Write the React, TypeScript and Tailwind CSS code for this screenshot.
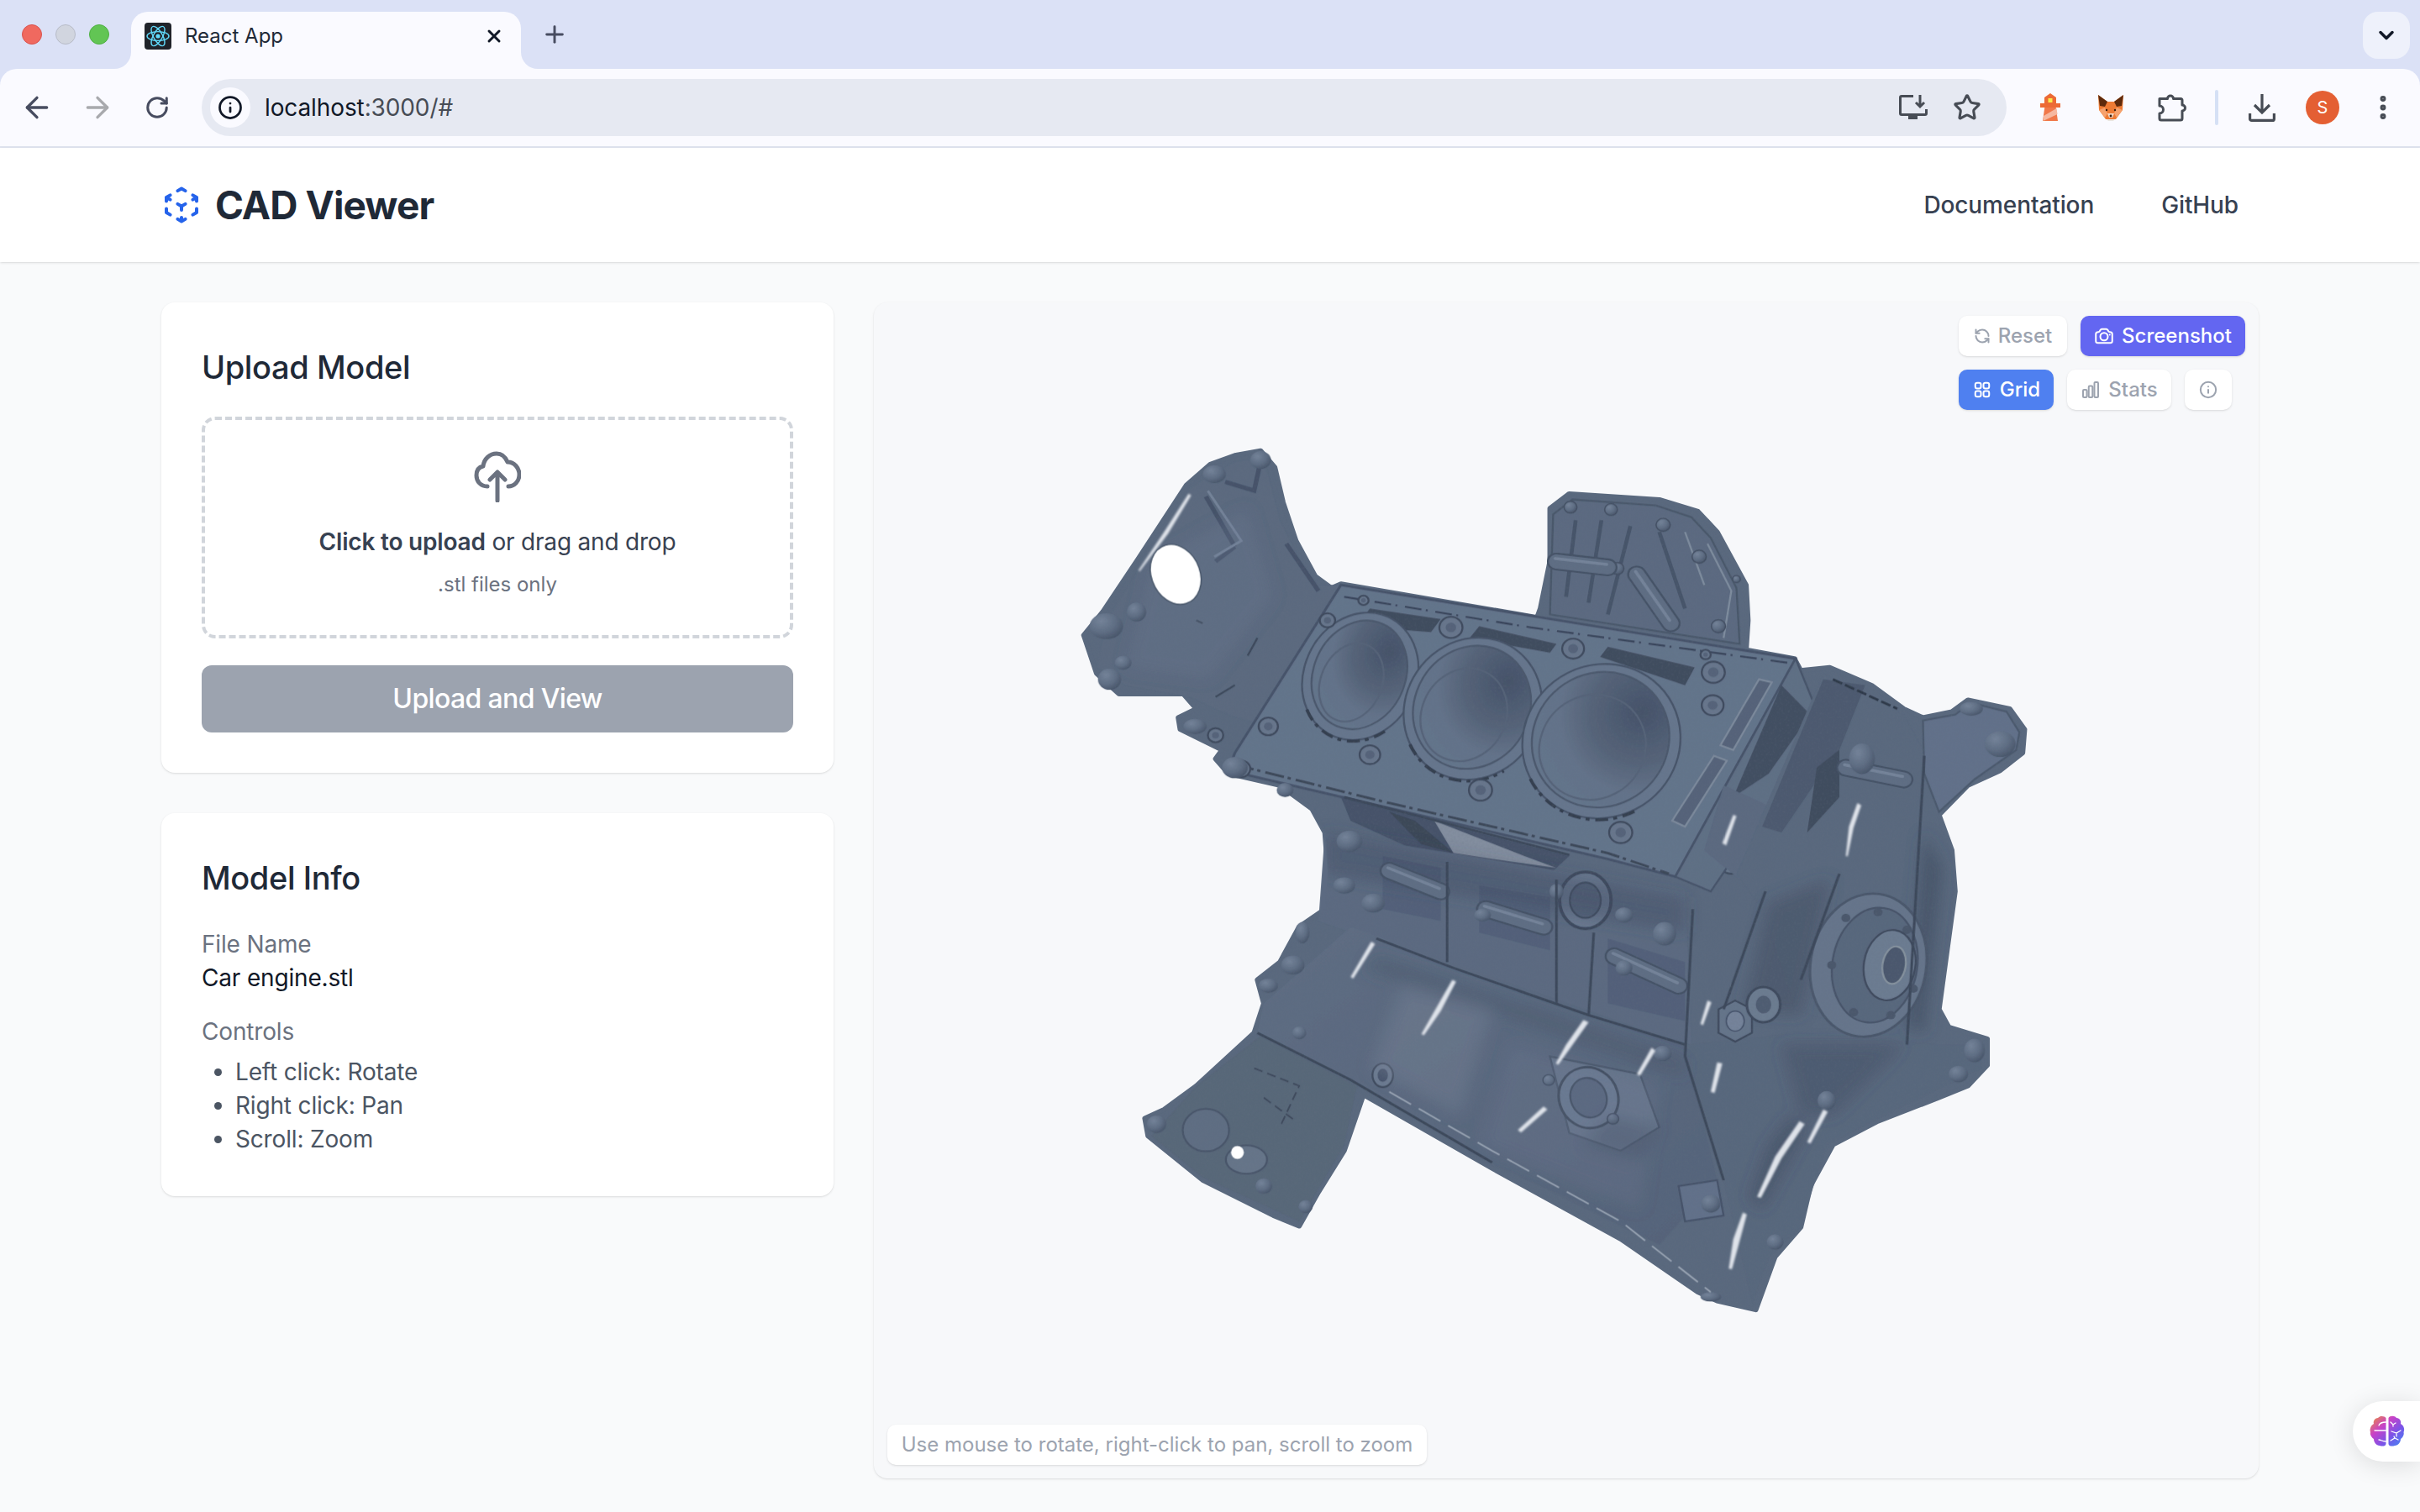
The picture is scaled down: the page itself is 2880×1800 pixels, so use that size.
import { ArrowLeft, ArrowRight, ChevronDown, EllipsisVertical, Info, Plus, RefreshCcw, RotateCw, Star, X } from 'lucide-react';
import { HiOutlineCamera, HiOutlineChartBar, HiOutlineCubeTransparent, HiOutlineSquares2X2 } from 'react-icons/hi2';

function ReactFavicon() {
  return (
    <svg width="32" height="32" viewBox="0 0 32 32" className="shrink-0">
      <rect width="32" height="32" rx="4" fill="#20232a" />
      <g fill="none" stroke="#61dafb" strokeWidth="1.4">
        <ellipse cx="16" cy="16" rx="13" ry="5.4" />
        <ellipse cx="16" cy="16" rx="13" ry="5.4" transform="rotate(60 16 16)" />
        <ellipse cx="16" cy="16" rx="13" ry="5.4" transform="rotate(120 16 16)" />
      </g>
      <circle cx="16" cy="16" r="2.6" fill="#61dafb" />
    </svg>
  );
}

function InstallIcon() {
  return (
    <svg width="34" height="32" viewBox="0 0 34 32" fill="none" stroke="#474c55" strokeWidth="3">
      <path d="M17 2.5H3a1.5 1.5 0 0 0-1.5 1.500V23a1.500 1.500 0 0 0 1.500 1.500h28a1.500 1.500 0 0 0 1.500-1.500v-5" />
      <path d="M25 1v13M20 10l5 5 5-5" />
      <path d="M11 26h11v4H11z" fill="#474c55" stroke="none" />
    </svg>
  );
}

function LighthouseIcon() {
  return (
    <svg width="24" height="34" viewBox="0 0 24 34">
      <path d="M3 33 6 12h12l3 21z" fill="#f0784a" />
      <path d="M4 27 19.500 18l1 7L3.500 33z" fill="#f6b8a0" />
      <path d="M0 12h24v5H0z" fill="#ec6a35" />
      <path d="M5 12V5l7-5 7 5v7z" fill="#ec6a35" />
      <path d="M9.500 6h5v5h-5z" fill="#fbe94b" />
    </svg>
  );
}

function FoxIcon() {
  return (
    <svg width="32" height="32" viewBox="0 0 32 32">
      <path d="M1 1 12 9h8L31 1l-1 18-8 11h-12L2 19z" fill="#ee7b35" />
      <path d="M1 1l11 8-3 6-6-1zM31 1 20 9l3 6 6-1z" fill="#5e2a0c" />
      <path d="M2 19l7-3 3 7-3 5zM30 19l-7-3-3 7 3 5z" fill="#f6a26e" />
      <path d="M12 23h8l-2 5h-4z" fill="#f4d8c6" />
      <circle cx="16" cy="26" r="1.400" fill="#3a1c0a" />
      <circle cx="11" cy="19" r="1.200" fill="#3a1c0a" />
      <circle cx="21" cy="19" r="1.200" fill="#3a1c0a" />
      <path d="M11 30h10l-2 2h-6z" fill="#e9e5e0" />
    </svg>
  );
}

function PuzzleIcon() {
  return (
    <svg width="34" height="34" viewBox="0 0 34 34" fill="none" stroke="#474c55" strokeWidth="3" strokeLinejoin="round">
      <path d="M2 6.500h9.500a3.500 3.500 0 0 1 7 0H27a2 2 0 0 1 2 2v5.500a3.500 3.500 0 0 1 0 7v9a2 2 0 0 1-2 2H4a2 2 0 0 1-2-2v-6a4.500 4.500 0 0 0 0-9z" />
    </svg>
  );
}

function DownloadIcon() {
  return (
    <svg width="32" height="34" viewBox="0 0 32 34" fill="none" stroke="#474c55" strokeWidth="3.200">
      <path d="M16 1v21M7 14l9 9 9-9" />
      <path d="M1.600 24v6.400a2 2 0 0 0 2 2h24.800a2 2 0 0 0 2-2V24" />
    </svg>
  );
}

function UploadCloudIcon() {
  return (
    <svg width="56" height="62" viewBox="24 16 56 62" fill="none" stroke="#6b7280" strokeWidth="5" strokeLinecap="round" strokeLinejoin="round">
      <path d="M40 59C32 59 27 53 27 46 27 40 30 36 35 35 36 26 43 20 51 20 57 20 61 23 64 30 72 30 78 37 78 45 78 53 72 59 65 59" />
      <path d="M52 76V42M43 51 52 42 61 51" />
    </svg>
  );
}

function BrainIcon() {
  return (
    <svg width="42" height="38" viewBox="0 0 42 38">
      <defs>
        <linearGradient id="brain" x1="0" y1="0" x2="1" y2="1">
          <stop offset="0" stopColor="#f0952f" />
          <stop offset="0.35" stopColor="#c842c8" />
          <stop offset="0.65" stopColor="#7a54e8" />
          <stop offset="1" stopColor="#3f8cf4" />
        </linearGradient>
      </defs>
      <path
        fill="url(#brain)"
        d="M19.500 3C18 .500 12 0 10 3 6 3 4 7 5 10 1 12 0 17 1 20c-1 3 2 7 4 8 0 4 3 8 7 8 3 1 7 1 7.500-2zM22.500 3C24 0 30 0 32 3c4 0 6 4 5 7 4 2 5 7 3.500 10 1 3-1.500 7-3.500 8 0 4-3 8-7 8-3 1-7 1-7.500-2z"
      />
      <g fill="none" stroke="#ffffff" strokeWidth="1.300" strokeLinecap="round">
        <path d="M6 18h13.500M11 12c1-3 4-4 8.500-4M11 29c3 0 3 2 8.500 2" />
        <path d="M25 8l3 3 3-2M28 11v2M26 19l6 2 5-3M32 21v4M25 30l5-3 4 2M30 27l-1-2" />
      </g>
    </svg>
  );
}

const deckBolts = [
  [444, 340, 12], [500, 306, 8], [636, 352, 18], [826, 388, 17], [1044, 428, 18], [1043, 484, 17],
  [352, 520, 15], [510, 568, 16], [682, 628, 18], [900, 700, 18], [1072, 750, 20], [1032, 398, 8],
  [310, 592, 14], [270, 535, 12], [1192, 535, 12],
];

const coverBolts = [
  [822, 148, 10], [885, 152, 10], [966, 178, 11], [1022, 232, 11], [1052, 350, 11], [800, 240, 8],
  [895, 252, 10], [1080, 270, 6],
];

// rounded bosses around the casting: x, y, rx, ry
const lumps = [
  [340, 68, 16, 15], [268, 92, 18, 15], [100, 350, 26, 22], [147, 326, 15, 16], [126, 412, 13, 12], [105, 440, 18, 18],
  [238, 520, 18, 13], [300, 590, 20, 18], [378, 628, 13, 12], [478, 715, 20, 18], [515, 820, 18, 16],
  [470, 790, 17, 14], [405, 870, 11, 18], [352, 960, 15, 12], [390, 925, 18, 16], [178, 1195, 15, 15], [1490, 550, 24, 22],
  [1445, 490, 18, 12], [1450, 1070, 16, 20], [1425, 1110, 15, 14], [968, 872, 18, 20], [905, 930, 13, 13], [800, 800, 11, 13],
  [905, 840, 14, 13], [685, 840, 13, 11], [1220, 1155, 14, 16], [1040, 1330, 15, 15],
  [1140, 1395, 13, 13], [965, 1075, 14, 13], [1040, 1488, 16, 8], [1275, 575, 20, 26], [400, 1040, 11, 11],
];

// cast pipes: path drawn wide and dark, then narrow and light
const tubes = [
  'M800 240 880 250',
  'M925 262 978 345',
  'M540 765 620 800',
  'M690 830 780 860',
  'M890 910 990 960',
  'M1250 590 1340 610',
];

const highlights = [
  'M638 950 612 1000 590 1042 594 1044 620 1003 644 953z',
  'M842 1018 815 1060 799 1092 803 1094 824 1062 850 1022z',
  'M1178 1190 1140 1250 1112 1318 1118 1320 1150 1253 1186 1195z',
  'M1090 1345 1075 1390 1068 1440 1073 1441 1085 1393 1096 1348z',
  'M1050 1090 1040 1140 1046 1142 1058 1092z',
  'M1268 650 1255 690 1250 740 1253 740 1262 692 1274 654z',
  'M1058 718 1075 670 1080 672 1064 722z',
  'M1035 985 1024 1025 1028 1027 1041 988z',
  'M228 125 190 190 150 255 152 257 196 193 232 128z',
  'M512 885 480 945 484 948 518 889z',
  'M948 1065 925 1110 930 1113 954 1070z',
  'M780 1165 740 1205 745 1209 786 1170z',
  'M1215 1170 1190 1225 1195 1228 1222 1174z',
];

const darkLines = [
  'M470 640 820 738',
  'M520 880 640 930 850 1010 1000 1060',
  'M335 1040 480 1120 700 1260',
  'M630 750 630 920',
  'M800 780 800 990',
  'M858 870 850 1010',
  'M1012 830 1000 1080 1060 1290',
  'M1125 800 1060 1000',
  'M1240 770 1180 950',
  'M1372 570 1345 1060',
];

const shades = [
  { d: 'M440 700 1000 810 1000 870 440 770z', fill: '#3f4c5f', opacity: 0.4 },
  { d: 'M520 905 1000 1085 1000 1115 500 935z', fill: '#3f4c5f', opacity: 0.3 },
  { d: 'M1372 700 1400 760 1372 1040 1345 1030z', fill: '#3d495b', opacity: 0.55 },
  { d: 'M1130 820 1225 780 1180 1010 1090 1000z', fill: '#3f4c5f', opacity: 0.45 },
  { d: 'M1150 1060 1340 1060 1230 1180 1180 1180z', fill: '#3f4c5f', opacity: 0.4 },
  { d: 'M1130 1230 1165 1180 1190 1200 1120 1340 1100 1320z', fill: '#39455a', opacity: 0.45 },
  { d: 'M560 960 700 1000 650 1180 510 1100z', fill: '#7a889c', opacity: 0.35 },
  { d: 'M730 1060 960 1130 930 1340 680 1230z', fill: '#71809a', opacity: 0.2 },
  { d: 'M880 1180 960 1200 930 1260 840 1230z', fill: '#3f4c5f', opacity: 0.3 },
  { d: 'M170 240 320 150 360 300 260 440 130 420z', fill: '#71809a', opacity: 0.2 },
];

function Engine() {
  const outline =
    'M65 365 95 325 150 235 225 110 262 75 300 60 340 52 362 80 375 140 395 205 425 265 450 285 465 278 770 335 775 320 790 240 790 150 820 125 960 135 1020 155 1050 190 1095 280 1098 340 1095 390 1170 405 1180 425 1225 420 1290 450 1340 490 1370 505 1415 495 1440 475 1505 490 1528 525 1525 565 1490 595 1440 620 1395 670 1415 730 1420 800 1395 1000 1410 1030 1470 1050 1470 1095 1440 1130 1395 1150 1300 1190 1230 1230 1195 1300 1180 1370 1140 1420 1110 1510 1050 1495 1020 1480 900 1390 700 1270 540 1170 500 1145 470 1240 430 1310 400 1368 360 1350 250 1290 165 1215 160 1185 190 1170 240 1130 330 1040 345 990 335 950 370 920 400 860 440 830 445 770 440 700 420 660 370 620 290 600 270 575 280 560 215 525 212 505 240 490 220 465 120 465 85 430z';
  return (
    <svg viewBox="0 0 1568 1568" preserveAspectRatio="none" className="absolute left-[200px] top-[140px] h-[1100px] w-[1200px]">
      <defs>
        <radialGradient id="bore" cx="0.72" cy="0.22" r="0.75">
          <stop offset="0" stopColor="#46536a" />
          <stop offset="0.5" stopColor="#566479" />
          <stop offset="0.8" stopColor="#64738a" />
          <stop offset="1" stopColor="#64748b" />
        </radialGradient>
        <radialGradient id="lump" cx="0.35" cy="0.3" r="0.8">
          <stop offset="0" stopColor="#75849a" />
          <stop offset="0.55" stopColor="#5f6e84" />
          <stop offset="1" stopColor="#455266" />
        </radialGradient>
        <linearGradient id="lower" x1="0" y1="0" x2="1" y2="1">
          <stop offset="0" stopColor="#5f6e84" />
          <stop offset="1" stopColor="#56647a" />
        </linearGradient>
        <filter id="soft">
          <feGaussianBlur stdDeviation="1" />
        </filter>
        <filter id="wide" x="-20%" y="-20%" width="140%" height="140%">
          <feGaussianBlur stdDeviation="12" />
        </filter>
        <filter id="glow">
          <feGaussianBlur stdDeviation="1.500" />
        </filter>
        <filter id="grain" x="0" y="0" width="100%" height="100%">
          <feTurbulence type="fractalNoise" baseFrequency="0.3" numOctaves="2" seed="4" />
          <feColorMatrix values="0 0 0 0 0.15 0 0 0 0 0.18 0 0 0 0 0.24 1.6 0 0 0 -0.78" />
          <feComposite in2="SourceGraphic" operator="in" />
        </filter>
        <clipPath id="castingClip">
          <path d={outline} />
        </clipPath>
      </defs>

      <path d={outline} fill="#5a697e" stroke="#5a697e" strokeWidth="8" strokeLinejoin="round" />

      <g filter="url(#soft)">
        {/* rear cover */}
        <path d="M790 330 795 160 825 135 955 145 1010 165 1040 200 1080 285 1085 380z" fill="#5c6b81" stroke="#4a586b" strokeWidth="3" />
        <path d="M830 170 815 300M870 170 850 310M915 180 880 330M960 190 1000 320" stroke="#47546a" strokeWidth="6" fill="none" />
        <path d="M1035 210 1072 290 1060 370M1000 190 1030 280" stroke="#7f8d9f" strokeWidth="3" fill="none" />
        {coverBolts.map(([x, y, r]) => (
          <circle key={`${x}-${y}`} cx={x} cy={y} r={r} fill="url(#lump)" stroke="#445064" strokeWidth="2" />
        ))}

        {/* left flange */}
        <path d="M100 340 230 115 300 70 345 65 370 170 420 280 470 280 350 520 290 500 230 470 130 450 85 420z" fill="#5b6a7f" />
        <path d="M255 130 300 215M300 215 270 240M340 70 330 120 285 105M380 210 430 290" stroke="#46536a" strokeWidth="7" fill="none" />
        <path d="M258 120 310 205 268 232" stroke="#75849a" strokeWidth="4" fill="none" />
        <path d="M240 340 250 345M320 400 335 370M300 450 270 470" stroke="#3e4a5c" strokeWidth="3" fill="none" />

        {/* deck */}
        <path d="M465 280 1172 405 985 775 880 745 290 595 300 565z" fill="#64748b" stroke="#46536a" strokeWidth="4" />
        <path d="M510 320 620 338 605 360 488 350zM680 350 800 380 790 395 665 370zM880 385 1015 420 1000 450 868 402z" fill="#414d5f" />
        <path d="M470 300 760 352 1160 412" stroke="#38445a" strokeWidth="3" strokeDasharray="26 7 3 12" fill="none" />
        <path d="M300 585 540 650 880 735 975 770" stroke="#3c4859" strokeWidth="4" strokeDasharray="30 6 5 8" fill="none" />

        {/* bores */}
        {[
          [495, 435, 88, 110],
          [670, 490, 106, 122],
          [870, 545, 122, 132],
        ].map(([cx, cy, rx, ry]) => (
          <g key={cx} transform={`rotate(18 ${cx} ${cy})`}>
            <ellipse cx={cx} cy={cy} rx={rx} ry={ry} fill="#66768d" stroke="#475469" strokeWidth="3" />
            <ellipse cx={cx - 2} cy={cy - 2} rx={rx - 16} ry={ry - 16} fill="url(#bore)" stroke="#4c596d" strokeWidth="3" />
            <ellipse cx={cx - 10} cy={cy + 14} rx={rx - 40} ry={ry - 42} fill="none" stroke="#566479" strokeWidth="3" />
            <path
              d={`M${cx - rx * 0.7} ${cy + ry * 0.72}A${rx} ${ry} 0 0 0 ${cx + rx * 0.74} ${cy + ry * 0.7}`}
              fill="none"
              stroke="#343f50"
              strokeWidth="5"
              strokeDasharray="20 8 6 9"
            />
          </g>
        ))}

        {deckBolts.map(([x, y, r]) => (
          <g key={`${x}-${y}`}>
            <circle cx={x} cy={y} r={r} fill="#67768c" stroke="#3f4b5e" strokeWidth="3" />
            <circle cx={x} cy={y} r={r * 0.45} fill="#56647a" />
          </g>
        ))}

        {/* deck side with slots */}
        <path d="M1172 405 1215 520 1040 800 985 775z" fill="#5f6f85" stroke="#47546a" strokeWidth="3" />
        <path d="M1115 440 1135 445 1075 560 1055 552zM1045 570 1065 578 1000 690 980 680z" fill="#56647a" stroke="#7d8b9d" strokeWidth="3" />
        <path d="M1150 450 1195 500 1130 600 1075 640z" fill="#434f62" />
        <path d="M1060 620 1160 670 1085 780 1030 730z" fill="#5b6a80" />

        {/* under deck */}
        <path d="M465 640 820 740 790 770 600 740 480 680z" fill="#46536a" />
        <path d="M610 680 750 740 800 760 700 745 640 735z" fill="#838e9f" />
        <path d="M540 665 590 720 640 735 580 680z" fill="#3c4859" />

        {/* mid section */}
        <path d="M440 700 1000 800 1010 1060 850 1010 640 930 430 850z" fill="#5c6b81" />
        <path d="M530 740 620 760 620 850 530 830zM680 790 790 810 790 900 680 870zM880 880 1000 920 1000 1020 880 990z" fill="#53617a" />
        <ellipse cx="845" cy="815" rx="40" ry="48" fill="#6a7990" stroke="#3f4b5e" strokeWidth="5" />
        <ellipse cx="845" cy="815" rx="24" ry="30" fill="#56647b" stroke="#414e61" strokeWidth="3" />

        {/* lower pan */}
        <path d="M345 990 480 860 1000 1060 1050 1290 960 1400 700 1260 480 1120 335 1040z" fill="url(#lower)" />
        <path d="M790 1080 930 1110 960 1200 900 1240 820 1210z" fill="#65748a" stroke="#4b586c" strokeWidth="3" />
        <ellipse cx="850" cy="1150" rx="46" ry="52" fill="#6a7990" stroke="#3e4a5c" strokeWidth="4" transform="rotate(-15 850 1150)" />
        <ellipse cx="850" cy="1150" rx="28" ry="34" fill="#56647c" stroke="#414e61" strokeWidth="3" transform="rotate(-15 850 1150)" />
        <circle cx="788" cy="1120" r="9" fill="url(#lump)" stroke="#3f4b5e" strokeWidth="2" />
        <circle cx="888" cy="1186" r="9" fill="url(#lump)" stroke="#3f4b5e" strokeWidth="2" />
        <ellipse cx="530" cy="1112" rx="16" ry="20" fill="#6b7a90" stroke="#3f4b5e" strokeWidth="3" />
        <ellipse cx="530" cy="1112" rx="8" ry="11" fill="#46536a" />

        {/* lower-left plate */}
        <path d="M340 1045 490 1130 470 1230 400 1360 250 1285 170 1215 240 1130z" fill="#586779" />
        <circle cx="255" cy="1205" r="36" fill="#5f6e83" stroke="#4a576b" strokeWidth="3" />
        <ellipse cx="318" cy="1255" rx="32" ry="24" fill="#667589" stroke="#4a576b" strokeWidth="3" />
        <path d="M330 1100 400 1130 370 1200M345 1150 395 1190" stroke="#3f4b5d" strokeWidth="2.500" strokeDasharray="14 8" fill="none" />
        <circle cx="345" cy="1300" r="13" fill="url(#lump)" />
        <circle cx="410" cy="1335" r="11" fill="url(#lump)" />

        {/* right block */}
        <path d="M1215 430 1340 500 1372 565 1345 1060 1170 1000 1120 830 1080 770z" fill="#5a697e" />
        <path d="M1215 440 1280 450 1240 560 1200 620 1150 700 1120 690z" fill="#4d5a6f" />
        <path d="M1205 590 1240 560 1240 640 1190 700z" fill="#414d5f" />
        <path d="M1230 440 1330 490" stroke="#2f3a4a" strokeWidth="4" strokeDasharray="16 5" fill="none" />
        <path d="M1370 510 1420 500 1445 480 1500 495 1520 530 1515 560 1450 610 1395 665 1372 600z" fill="#62718a" stroke="#4c5a6e" strokeWidth="3" />

        {/* right lower */}
        <path d="M1000 1060 1180 1040 1395 1060 1465 1060 1460 1100 1300 1185 1220 1230 1180 1370 1130 1420 1105 1500 1060 1290z" fill="#59687d" />
        <path d="M990 1300 1050 1290 1060 1350 1000 1360z" fill="#62718a" stroke="#46536a" strokeWidth="3" />

        <g filter="url(#wide)" clipPath="url(#castingClip)">
          {shades.map((s) => (
            <path key={s.d} d={s.d} fill={s.fill} opacity={s.opacity} />
          ))}
        </g>

        {/* pulley */}
        <ellipse cx="1285" cy="925" rx="90" ry="122" fill="#66758b" stroke="#4b586c" strokeWidth="4" transform="rotate(8 1285 925)" />
        <ellipse cx="1295" cy="925" rx="66" ry="98" fill="#59677d" stroke="#48556a" strokeWidth="3" transform="rotate(8 1295 925)" />
        <ellipse cx="1318" cy="925" rx="40" ry="60" fill="#6c7b91" stroke="#3f4b5e" strokeWidth="3" transform="rotate(8 1318 925)" />
        <ellipse cx="1325" cy="925" rx="18" ry="32" fill="#4c596e" stroke="#86939f" strokeWidth="3" transform="rotate(8 1325 925)" />
        {[
          [1250, 845], [1300, 835], [1345, 865], [1355, 965], [1320, 1010], [1262, 1005], [1228, 925],
        ].map(([x, y]) => (
          <circle key={`${x}-${y}`} cx={x} cy={y} r="7" fill="#4b586c" />
        ))}
        <path d="M1052 1000 1078 985 1104 1000 1104 1040 1078 1055 1052 1040z" fill="#65748a" stroke="#3f4b5e" strokeWidth="3" />
        <ellipse cx="1078" cy="1020" rx="14" ry="17" fill="#74839a" stroke="#46536a" strokeWidth="2" />
        <ellipse cx="1122" cy="992" rx="26" ry="30" fill="#6c7b90" stroke="#3f4b5e" strokeWidth="4" />
        <ellipse cx="1122" cy="992" rx="12" ry="15" fill="#505d72" />

        {tubes.map((d) => (
          <g key={d} fill="none" strokeLinecap="round">
            <path d={d} stroke="#455266" strokeWidth="30" />
            <path d={d} stroke="#5f6e84" strokeWidth="24" />
            <path d={d} stroke="#75849a" strokeWidth="5" transform="translate(-2 -5)" />
          </g>
        ))}
        {lumps.map(([x, y, rx, ry]) => (
          <ellipse key={`${x}-${y}`} cx={x} cy={y} rx={rx} ry={ry} fill="url(#lump)" />
        ))}
        {darkLines.map((d) => (
          <path key={d} d={d} fill="none" stroke="#3d495b" strokeWidth="4" />
        ))}
      </g>

      <path d={outline} fill="#000000" filter="url(#grain)" opacity="0.35" />

      <g filter="url(#glow)">
        {highlights.map((d) => (
          <path key={d} d={d} fill="#dfe3ea" />
        ))}
      </g>
      <path d="M540 1140 700 1240 900 1360 1040 1480" stroke="#9aa5b4" strokeWidth="2.500" fill="none" strokeDasharray="40 14" />

      {/* holes through the casting */}
      <ellipse cx="208" cy="262" rx="38" ry="52" transform="rotate(-18 208 262)" fill="#ffffff" stroke="#4a586b" strokeWidth="2" />
      <ellipse cx="304" cy="1243" rx="10" ry="11" fill="#ffffff" />
    </svg>
  );
}

function ToolButton({
  icon,
  label,
  tone = 'bg-white text-[#9ca3af]',
  width,
}: {
  icon: React.ReactNode;
  label?: string;
  tone?: string;
  width: string;
}) {
  return (
    <button type="button" className={`flex h-12 items-center justify-center gap-[9px] rounded-[10px] text-2xl font-medium shadow-sm ${tone} ${width}`}>
      {icon}
      {label}
    </button>
  );
}

export default function App() {
  return (
    <div className="flex min-h-[1800px] flex-col overflow-hidden bg-[#f9fafb] font-[Inter,sans-serif]">
      {/* browser chrome */}
      <div className="bg-[#dbe1f6]">
        <div className="flex h-[82px] items-end">
          <div className="flex w-[156px] items-center gap-[16px] self-center pl-[26px]">
            <span className="size-6 rounded-full border border-[#d9534f] bg-[#f0695f]" />
            <span className="size-6 rounded-full border border-[#b8bcc8] bg-[#d1d5df]" />
            <span className="size-6 rounded-full border border-[#4fb043] bg-[#62c554]" />
          </div>
          <div className="relative flex h-[68px] w-[464px] items-center rounded-t-[20px] bg-[#fafaff] pb-[10px] pl-[16px] pr-[20px]">
            <svg width="20" height="20" viewBox="0 0 20 20" className="absolute -left-[20px] bottom-0">
              <path d="M20 0v20H0A20 20 0 0 0 20 0z" fill="#fafaff" />
            </svg>
            <svg width="20" height="20" viewBox="0 0 20 20" className="absolute -right-[20px] bottom-0">
              <path d="M0 0v20h20A20 20 0 0 1 0 0z" fill="#fafaff" />
            </svg>
            <ReactFavicon />
            <span className="ml-4 flex-1 text-2xl text-[#1f2937]">React App</span>
            <X size={24} strokeWidth={3} className="text-[#111827]" />
          </div>
          <div className="ml-[24px] self-center">
            <Plus size={32} strokeWidth={2.2} className="text-[#474c60]" />
          </div>
          <div className="ml-auto mr-[12px] mt-[14px] flex size-14 items-center justify-center self-start rounded-[18px] bg-[#eef1fb]">
            <ChevronDown size={28} strokeWidth={3} className="text-[#111827]" />
          </div>
        </div>
        <div className="flex h-[94px] items-start rounded-t-[20px] border-b-2 border-[#dfe3ef] bg-[#fafaff] pt-[12px]">
          <div className="flex h-[68px] w-[240px] items-center gap-[32px] pl-[24px]">
            <ArrowLeft size={40} strokeWidth={2} className="text-[#474c60]" />
            <ArrowRight size={40} strokeWidth={2} className="text-[#a8a9ad]" />
            <RotateCw size={30} strokeWidth={2.4} className="ml-[4px] text-[#474c60]" />
          </div>
          <div className="flex h-[68px] w-[2148px] items-center rounded-full bg-[#e6e9f2] pl-[10px] pr-[30px]">
            <div className="flex size-12 items-center justify-center rounded-full bg-[#fafaff]">
              <Info size={30} strokeWidth={2.2} className="text-[#111827]" />
            </div>
            <span className="ml-[17px] flex-1 text-[28px] tracking-[-0.004em] text-[#111827]">
              localhost<span className="text-[#474c55]">:3000/#</span>
            </span>
            <div className="flex items-center gap-[30px]">
              <InstallIcon />
              <Star size={34} strokeWidth={2.2} className="text-[#474c55]" />
            </div>
          </div>
          <div className="flex h-[68px] flex-1 items-center pl-[40px]">
            <LighthouseIcon />
            <span className="ml-[44px]">
              <FoxIcon />
            </span>
            <span className="ml-[40px]">
              <PuzzleIcon />
            </span>
            <span className="ml-[34px] h-[42px] w-[4px] rounded bg-[#d5e0f5]" />
            <span className="ml-[36px]">
              <DownloadIcon />
            </span>
            <span className="ml-[36px] flex size-10 items-center justify-center rounded-full bg-[#e45f33] text-xl text-white">S</span>
            <EllipsisVertical size={36} strokeWidth={2.6} className="ml-[34px] text-[#474c55]" />
          </div>
        </div>
      </div>

      {/* app header */}
      <header className="flex h-[136px] items-center justify-between bg-white pl-[192px] pr-[216px] shadow-sm">
        <div className="flex items-center gap-[16px]">
          <HiOutlineCubeTransparent size={48} strokeWidth={2} className="text-[#2563eb]" />
          <h1 className="text-[46px] font-bold tracking-[-0.02em] text-[#1f2937]">CAD Viewer</h1>
        </div>
        <nav className="flex items-center gap-[80px] text-[28px] font-medium tracking-[-0.004em] text-[#374151]">
          <a>Documentation</a>
          <a>GitHub</a>
        </nav>
      </header>

      {/* main */}
      <main className="flex items-start gap-[48px] pl-[192px] pt-[48px]">
        <aside className="flex w-[800px] flex-col gap-[48px]">
          <section className="rounded-2xl bg-white p-[48px] shadow-sm">
            <h2 className="mt-[1px] mb-[-1px] text-[38px] leading-[56px] font-medium tracking-[-0.01em] text-[#1f2937]">Upload Model</h2>
            <div className="mt-[32px] flex h-[264px] flex-col items-center rounded-2xl border-4 border-dashed border-[#d1d5db] pt-[36px]">
              <UploadCloudIcon />
              <p className="mt-[26px] text-[28px] tracking-[-0.007em] text-[#374151]">
                <span className="font-semibold">Click to upload</span> or drag and drop
              </p>
              <p className="mt-[14px] text-2xl text-[#6b7280]">.stl files only</p>
            </div>
            <button type="button" className="mt-[32px] h-[80px] w-full rounded-xl bg-[#9ca3af] text-[32px] font-medium tracking-[-0.02em] text-white">
              Upload and View
            </button>
          </section>

          <section className="rounded-2xl bg-white p-[48px] shadow-sm">
            <h2 className="mt-[1px] mb-[-1px] text-[38px] leading-[56px] font-medium tracking-[-0.01em] text-[#1f2937]">Model Info</h2>
            <div className="mt-[32px] text-[28px] leading-[40px] tracking-[-0.006em]">
              <p className="text-[#6b7280]">File Name</p>
              <p className="text-[#111827]">Car engine.stl</p>
              <p className="mt-[24px] text-[#6b7280]">Controls</p>
              <ul className="mt-[8px] list-outside list-disc pl-[40px] text-[#4b5563]">
                <li>Left click: Rotate</li>
                <li>Right click: Pan</li>
                <li>Scroll: Zoom</li>
              </ul>
            </div>
          </section>
        </aside>

        <section className="relative h-[1400px] w-[1648px] rounded-2xl bg-[#f7f8fa] shadow-sm">
          <Engine />
          <div className="absolute right-[16px] top-[16px] flex flex-col gap-[16px]">
            <div className="flex justify-start gap-[16px]">
              <ToolButton width="w-[129px]" label="Reset" icon={<RefreshCcw size={20} strokeWidth={2.4} />} />
              <ToolButton width="w-[196px]" tone="bg-[#6366f1] text-white" label="Screenshot" icon={<HiOutlineCamera size={24} strokeWidth={2} />} />
            </div>
            <div className="flex gap-[16px]">
              <ToolButton width="w-[113px]" tone="bg-[#4f80f0] text-white" label="Grid" icon={<HiOutlineSquares2X2 size={24} strokeWidth={2} />} />
              <ToolButton width="w-[124px]" label="Stats" icon={<HiOutlineChartBar size={24} strokeWidth={2} />} />
              <ToolButton width="w-[56px]" icon={<Info size={22} strokeWidth={2.2} />} />
            </div>
          </div>
          <div className="absolute bottom-[16px] left-[16px] flex h-12 w-[642px] items-center justify-center rounded-[10px] bg-white text-2xl text-[#9ca3af] shadow-sm">
            Use mouse to rotate, right-click to pan, scroll to zoom
          </div>
        </section>
      </main>

      <div className="absolute left-[2800px] top-[1668px] flex h-[72px] w-[80px] items-center rounded-l-[36px] bg-white pl-[20px] shadow-[0_4px_30px_rgba(0,0,0,0.12)]">
        <BrainIcon />
      </div>
    </div>
  );
}
